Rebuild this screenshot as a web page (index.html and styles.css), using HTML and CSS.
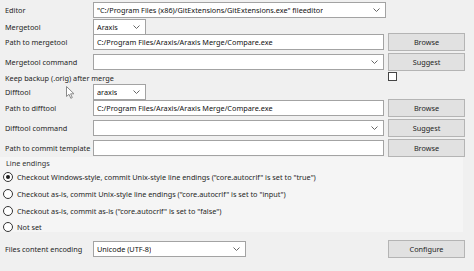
FILE: index.html
```html
<!DOCTYPE html>
<html lang="en">
<head>
<meta charset="UTF-8">
<title>Git Extensions settings</title>
<link rel="stylesheet" href="styles.css">
</head>
<body>

<div class="settings">
    <div class="row r-editor">
        <span class="label">Editor</span>
        <div class="combo wide">
            <span class="value">"C:/Program Files (x86)/GitExtensions/GitExtensions.exe" fileeditor</span>
            <svg class="arrow" width="7" height="4" viewBox="0 0 7 4"><polyline points="0.5,0.5 3.5,3.5 6.5,0.5" fill="none" stroke="#666" stroke-width="1"/></svg>
        </div>
    </div>
    <div class="row r-tool">
        <span class="label">Mergetool</span>
        <div class="combo small">
            <span class="value">Araxis</span>
            <svg class="arrow" width="7" height="4" viewBox="0 0 7 4"><polyline points="0.5,0.5 3.5,3.5 6.5,0.5" fill="none" stroke="#666" stroke-width="1"/></svg>
        </div>
    </div>
    <div class="row r-btn">
        <span class="label">Path to mergetool</span>
        <div class="field"><span class="value">C:/Program Files/Araxis/Araxis Merge/Compare.exe</span></div>
        <button class="btn">Browse</button>
    </div>
    <div class="row r-btn gap">
        <span class="label">Mergetool command</span>
        <div class="combo">
            <span class="value"></span>
            <svg class="arrow" width="7" height="4" viewBox="0 0 7 4"><polyline points="0.5,0.5 3.5,3.5 6.5,0.5" fill="none" stroke="#666" stroke-width="1"/></svg>
        </div>
        <button class="btn">Suggest</button>
    </div>
    <div class="row r-check">
        <span class="label">Keep backup (.orig) after merge</span>
        <span class="checkbox"></span>
    </div>
    <div class="row r-tool2">
        <span class="label">Difftool</span>
        <div class="combo small">
            <span class="value">araxis</span>
            <svg class="arrow" width="7" height="4" viewBox="0 0 7 4"><polyline points="0.5,0.5 3.5,3.5 6.5,0.5" fill="none" stroke="#666" stroke-width="1"/></svg>
        </div>
    </div>
    <div class="row r-btn">
        <span class="label">Path to difftool</span>
        <div class="field"><span class="value">C:/Program Files/Araxis/Araxis Merge/Compare.exe</span></div>
        <button class="btn">Browse</button>
    </div>
    <div class="row r-btn gap">
        <span class="label">Difftool command</span>
        <div class="combo">
            <span class="value"></span>
            <svg class="arrow" width="7" height="4" viewBox="0 0 7 4"><polyline points="0.5,0.5 3.5,3.5 6.5,0.5" fill="none" stroke="#666" stroke-width="1"/></svg>
        </div>
        <button class="btn">Suggest</button>
    </div>
    <div class="row r-btn gap">
        <span class="label">Path to commit template</span>
        <div class="field"><span class="value"></span></div>
        <button class="btn">Browse</button>
    </div>

    <div class="group">
        <div class="group-title">Line endings</div>
        <div class="radio-row"><span class="radio checked"></span>Checkout Windows-style, commit Unix-style line endings ("core.autocrlf"  is set to "true")</div>
        <div class="radio-row"><span class="radio"></span>Checkout as-is, commit Unix-style line endings ("core.autocrlf"  is set to "input")</div>
        <div class="radio-row"><span class="radio"></span>Checkout as-is, commit as-is ("core.autocrlf"  is set to "false")</div>
        <div class="radio-row"><span class="radio"></span>Not set</div>
    </div>

    <div class="row r-enc">
        <span class="label">Files content encoding</span>
        <div class="combo enc">
            <span class="value">Unicode (UTF-8)</span>
            <svg class="arrow" width="7" height="4" viewBox="0 0 7 4"><polyline points="0.5,0.5 3.5,3.5 6.5,0.5" fill="none" stroke="#666" stroke-width="1"/></svg>
        </div>
        <button class="btn">Configure</button>
    </div>
</div>

<!-- mouse pointer left over the dialog -->
<svg class="pointer" width="9" height="13" viewBox="0 0 9 13">
    <path d="M0.5,0.5 L0.5,10.5 L3,8.3 L4.8,12.3 L6.3,11.6 L4.6,7.8 L8,7.8 Z" fill="#fff" stroke="#8a8a8a" stroke-width="1" stroke-linejoin="round"/>
</svg>

</body>
</html>
```

FILE: styles.css
```css
body {
    margin: 0;
    padding: 0;
    background-color: #f0f0f0;
    font-family: "Noto Sans", sans-serif;
    font-size: 7.3px;
    color: #1e1e1e;
    width: 474px;
    height: 271px;
    overflow: hidden;
    position: relative;
}
.settings {
    padding: 2px 9px 0 5px;
    display: flex;
    flex-direction: column;
}
.row {
    display: grid;
    grid-template-columns: 84px 291px 77px;
    column-gap: 4px;
    align-items: center;
}
.row.gap {
    margin-top: 2px;
}
.r-editor {
    height: 17px;
    align-items: start;
}
.r-editor .label,
.r-tool .label,
.r-tool2 .label {
    line-height: 16px;
}
.r-tool {
    height: 14px;
    align-items: start;
}
.r-tool2 {
    height: 15px;
    align-items: start;
}
.r-btn {
    height: 18px;
}
.r-check {
    height: 13px;
}
.r-enc {
    height: 17px;
    margin-top: 8px;
}
.label {
    white-space: nowrap;
}
.value {
    white-space: nowrap;
    overflow: hidden;
}
.field,
.combo {
    height: 16px;
    box-sizing: border-box;
    background-color: #fff;
    border: 1px solid #a3a3a3;
    display: flex;
    align-items: center;
    padding: 0 5px 0 3px;
    color: #111;
}
.combo {
    justify-content: space-between;
}
.combo.wide {
    width: 293px;
}
.combo.small {
    width: 53px;
}
.combo.enc {
    width: 153px;
}
.arrow {
    flex: none;
}
.btn {
    height: 18px;
    padding: 0;
    font-family: inherit;
    font-size: 7.3px;
    color: #1e1e1e;
    background-color: #e1e1e1;
    border: 1px solid #b4b4b4;
}
.checkbox {
    width: 9px;
    height: 9px;
    box-sizing: border-box;
    border: 1px solid #444;
    background-color: #fff;
    grid-column: 3;
    margin-top: -2px;
}
.group {
    background-color: #f5f5f5;
    margin: 0 2px 0 -5px;
    padding: 1px 0 2px 3px;
    height: 72px;
}
.group-title {
    padding-left: 3px;
    line-height: 11px;
    color: #333;
}
.radio-row {
    display: flex;
    align-items: center;
    height: 16.7px;
    white-space: nowrap;
}
.radio {
    width: 10px;
    height: 10px;
    box-sizing: border-box;
    border: 1px solid #333;
    border-radius: 50%;
    background-color: #fff;
    margin-right: 4px;
    display: flex;
    align-items: center;
    justify-content: center;
}
.radio.checked::after {
    content: "";
    width: 4px;
    height: 4px;
    border-radius: 50%;
    background-color: #1e1e1e;
}
.pointer {
    position: absolute;
    left: 66px;
    top: 86px;
}
```
